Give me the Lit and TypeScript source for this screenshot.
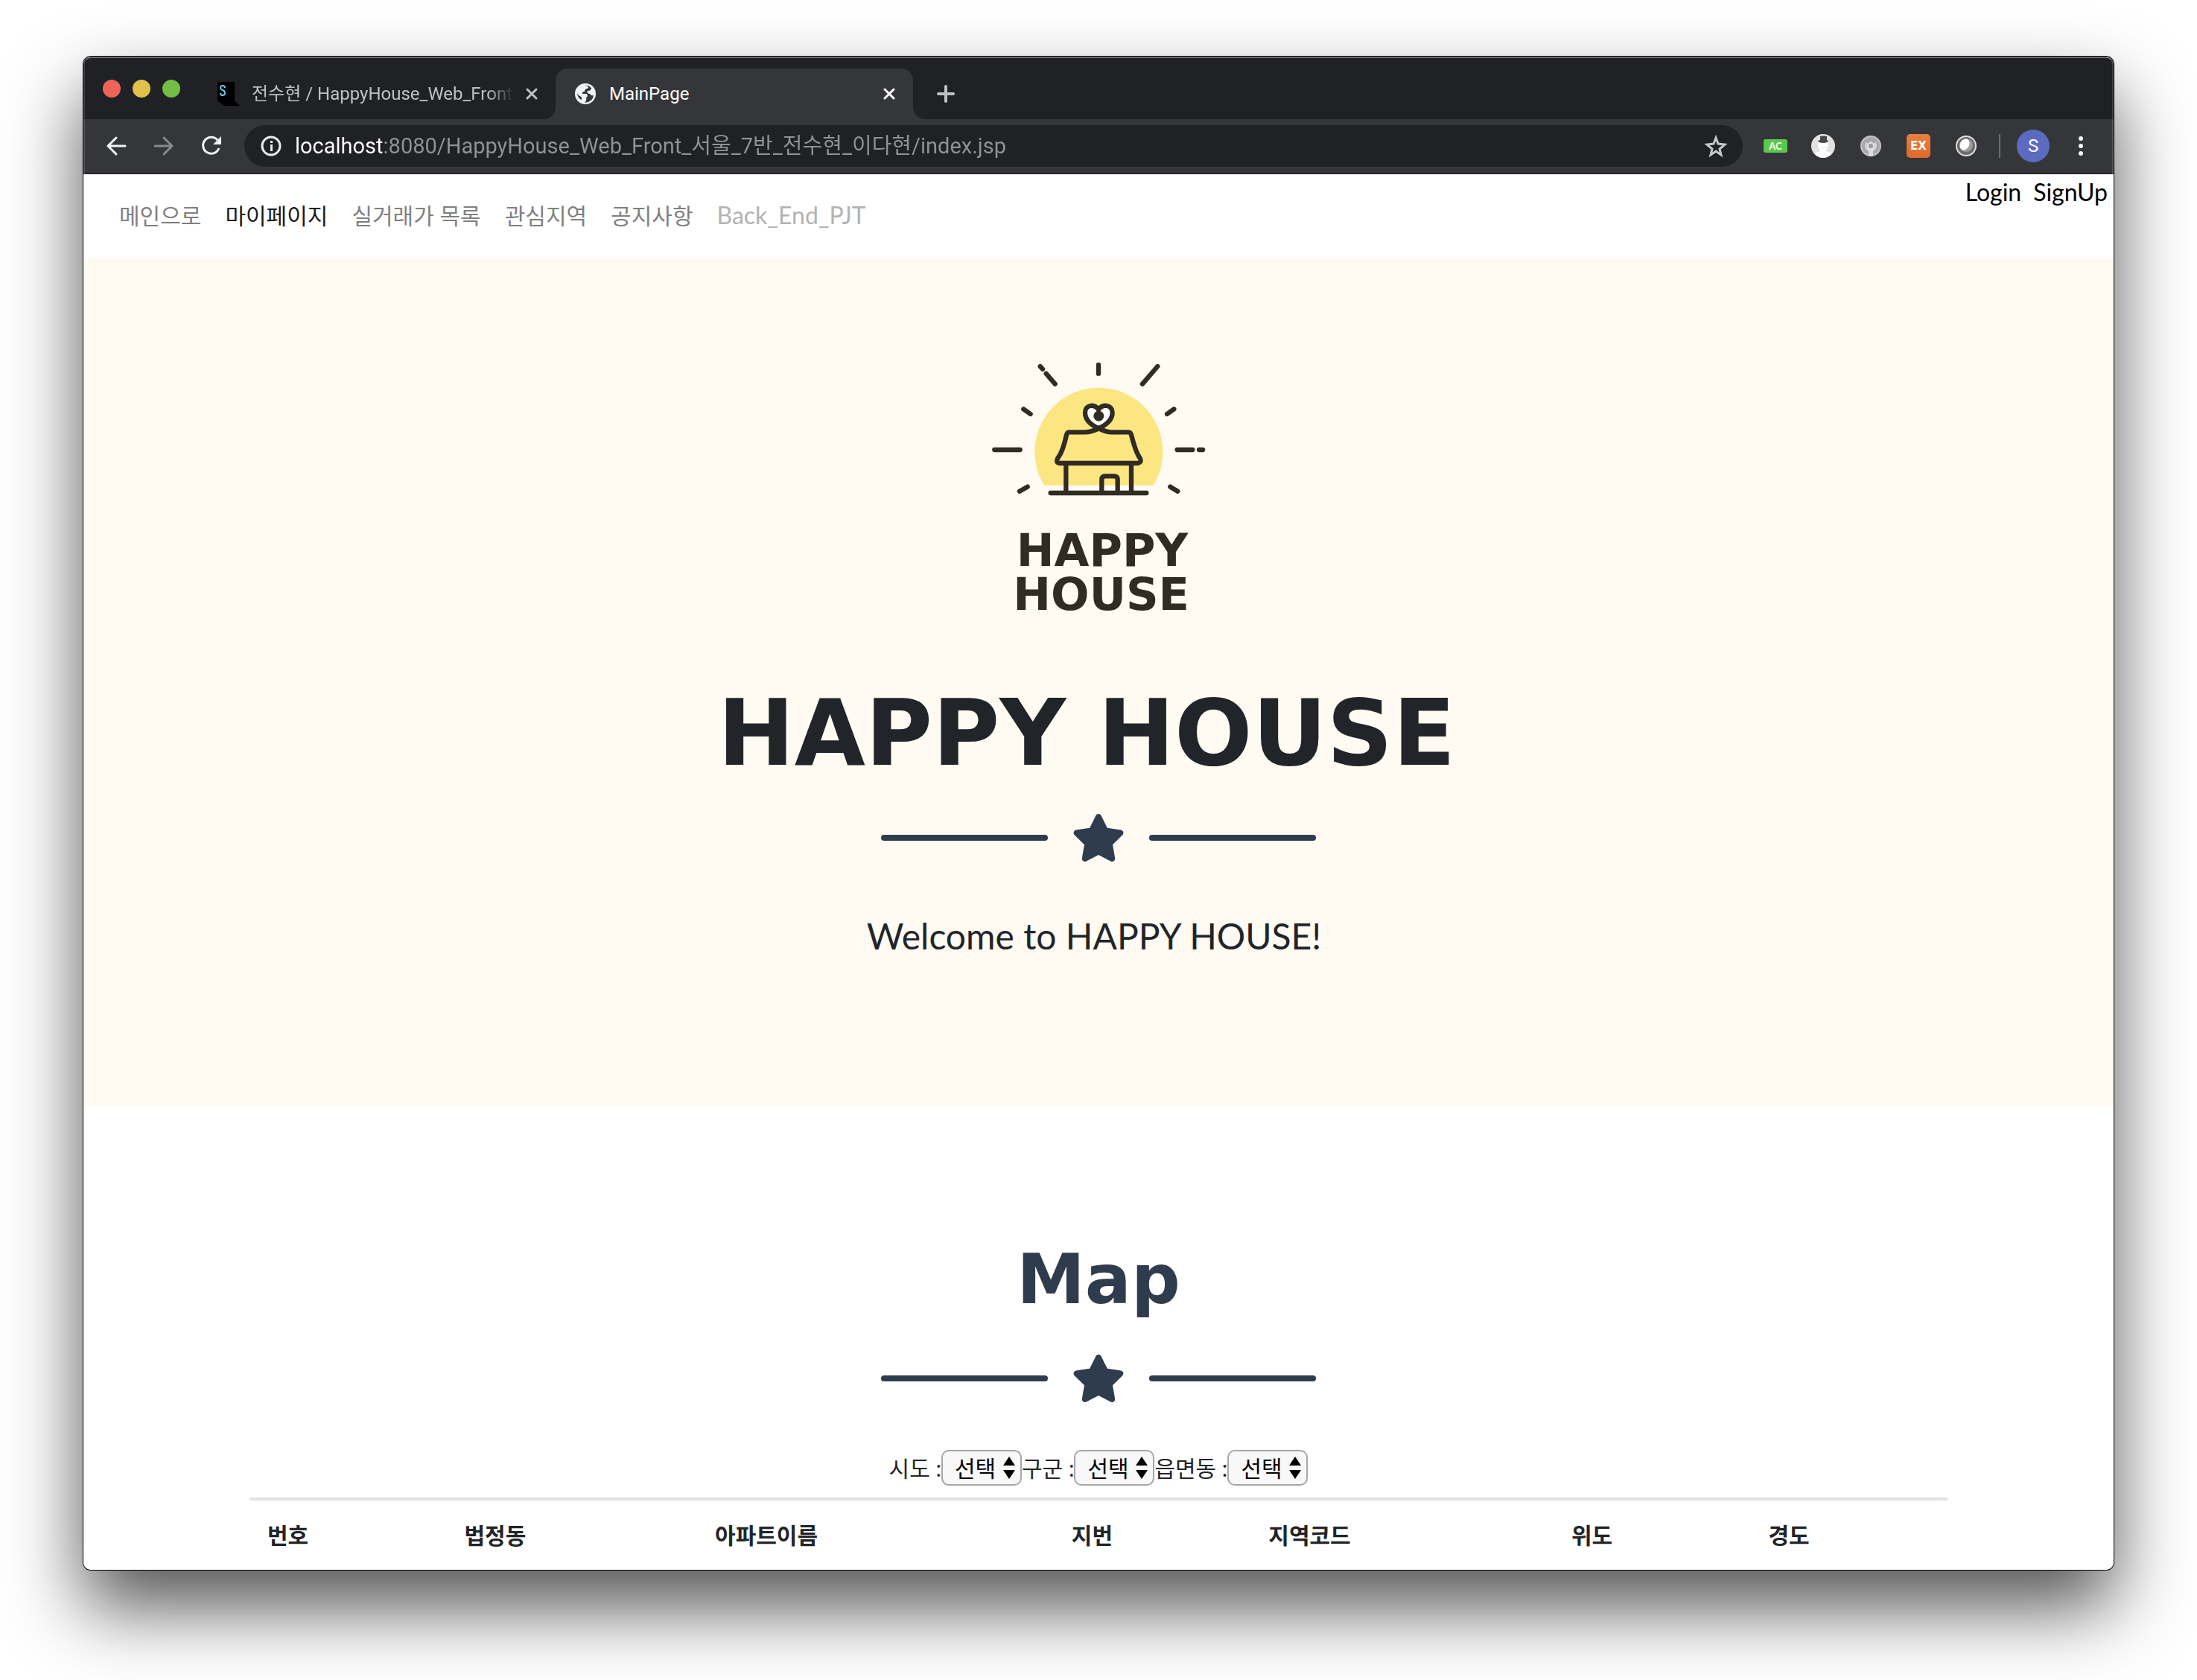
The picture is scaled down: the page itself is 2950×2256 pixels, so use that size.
import { LitElement, html, css, svg } from "lit";
import { customElement } from "lit/decorators.js";
import { classMap } from "lit/directives/class-map.js";

const NAV = [
  { text: "메인으로", kind: "muted" },
  { text: "마이페이지", kind: "current" },
  { text: "실거래가 목록", kind: "muted" },
  { text: "관심지역", kind: "muted" },
  { text: "공지사항", kind: "muted" },
  { text: "Back_End_PJT", kind: "disabled" },
];

const FILTERS = [
  { id: "sido", text: "시도 :" },
  { id: "gugun", text: "구군 :" },
  { id: "dong", text: "읍면동 :" },
];

const COLUMNS = [
  { name: "번호", cls: "w-s" },
  { name: "법정동", cls: "w-m" },
  { name: "아파트이름", cls: "w-xl" },
  { name: "지번", cls: "w-s" },
  { name: "지역코드", cls: "w-l" },
  { name: "위도", cls: "w-s" },
  { name: "경도", cls: "w-s" },
];

const closeIcon = html`<svg width="16" height="16" viewBox="0 0 16 16" fill="none" stroke="currentColor" stroke-width="3" stroke-linecap="round"><path d="M2 2l12 12M14 2L2 14" /></svg>`;

@customElement("browser-chrome")
export class BrowserChrome extends LitElement {
  static styles = css`
    :host {
      display: block;
      background: #202124;
      font-family: Roboto, "Noto Sans CJK KR", sans-serif;
      border-bottom: 2px solid #27262a;
    }
    button {
      display: flex;
      align-items: center;
      justify-content: center;
      padding: 0;
      border: 0;
      background: none;
      color: inherit;
      font: inherit;
    }
    svg { display: block; flex: none; }
    .strip {
      display: flex;
      height: 68px;
      padding-top: 16px;
    }
    .lights {
      display: flex;
      gap: 16px;
      width: 128px;
      padding: 15px 0 0 26px;
    }
    .light {
      width: 24px;
      height: 24px;
      border-radius: 50%;
    }
    .red { background: #ed6559; }
    .yellow { background: #e1c04c; }
    .green { background: #72be47; }
    .tab {
      position: relative;
      display: flex;
      align-items: center;
      box-sizing: border-box;
      width: 480px;
      padding: 0 24px;
      border-radius: 16px 16px 0 0;
      color: #bdc1c6;
      font-size: 24px;
      line-height: 32px;
    }
    .tab.active {
      background: #35363a;
      color: #fff;
    }
    .tab.active::before,
    .tab.active::after {
      content: "";
      position: absolute;
      bottom: 0;
      width: 16px;
      height: 16px;
    }
    .tab.active::before {
      right: 100%;
      background: radial-gradient(circle at 0 0, transparent 16px, #35363a 16px);
    }
    .tab.active::after {
      left: 100%;
      background: radial-gradient(circle at 100% 0, transparent 16px, #35363a 16px);
    }
    .title {
      flex: 1;
      min-width: 0;
      justify-content: flex-start;
      overflow: hidden;
      white-space: nowrap;
    }
    .title.faded {
      -webkit-mask-image: linear-gradient(90deg, #000 90%, transparent 100%);
      mask-image: linear-gradient(90deg, #000 90%, transparent 100%);
    }
    .title-row {
      display: flex;
      flex: 1;
      min-width: 0;
      gap: 16px;
      margin-right: 16px;
    }
    .new-tab {
      width: 64px;
      margin-left: 12px;
      color: #bdc1c6;
    }
    .toolbar {
      display: flex;
      align-items: center;
      height: 72px;
      padding: 0 12px;
      background: #35363a;
      color: #f1f3f4;
    }
    .tool {
      width: 64px;
      height: 56px;
      flex: none;
    }
    .dim { color: #87888b; }
    .omnibox {
      display: flex;
      align-items: center;
      flex: 1;
      min-width: 0;
      height: 56px;
      margin: 0 12px;
      border-radius: 28px;
      background: #202124;
    }
    .info { margin-left: 22px; }
    .url {
      flex: 1;
      min-width: 0;
      height: 52px;
      margin-left: 18px;
      padding: 0;
      border: 0;
      outline: 0;
      background: linear-gradient(90deg, #fff 120px, #919295 120px);
      -webkit-background-clip: text;
      background-clip: text;
      color: transparent;
      font: 29px/52px Roboto, "Noto Sans CJK KR", sans-serif;
    }
    .bookmark { width: 72px; height: 56px; color: #c6c7c9; }
    .rule {
      width: 2px;
      height: 32px;
      margin: 0 12px;
      background: #6c6d70;
    }
    .avatar {
      display: flex;
      align-items: center;
      justify-content: center;
      width: 44px;
      height: 44px;
      border-radius: 50%;
      background: #5c6bc0;
      color: #fff;
      font-size: 24px;
    }
    .chip {
      display: flex;
      align-items: center;
      justify-content: center;
      width: 32px;
      height: 18px;
      border-radius: 3px;
      background: #5bc94c;
      color: #fff;
      font: bold 13px Lato, sans-serif;
    }
    .chip.ex {
      height: 32px;
      border-radius: 5px;
      background: linear-gradient(#e5803e, #e0692f);
      font: bold 15px "DejaVu Sans", sans-serif;
    }
  `;

  render() {
    return html`
      <div class="strip">
        <div class="lights">
          <span class="light red"></span><span class="light yellow"></span><span class="light green"></span>
        </div>
        <div class="tab">
          <div class="title-row">
            <svg width="32" height="32" viewBox="0 0 32 32">
              <path d="M2 0H25V25L32 32H11L2 25z" fill="#000" />
              <path d="M12 8Q12 5 9 5Q6 5 6 8Q6 10 9 11Q12 12 12 15Q12 18 9 18Q6 18 6 15" fill="none" stroke="#6cc5ee" stroke-width="2" />
            </svg>
            <button class="title faded">전수현 / HappyHouse_Web_Front</button>
          </div>
          <button aria-label="Close tab">${closeIcon}</button>
        </div>
        <div class="tab active">
          <div class="title-row">
            <svg width="32" height="32" viewBox="0 0 32 32">
              <circle cx="16" cy="16" r="14" fill="#f1f3f4" />
              <path d="M16 5Q22 6 19 9Q15 9 15 13Q11 13 12 16H18Q20 20 17 21Q18 25 15 28Q26 27 27 18Q23 19 22 16Q17 15 19 12Q24 12 24 8Q20 4 16 5zM5 15Q5 20 10 24Q13 22 9 19Q6 18 5 15z" fill="#35363a" />
            </svg>
            <button class="title">MainPage</button>
          </div>
          <button aria-label="Close tab">${closeIcon}</button>
        </div>
        <button class="new-tab" aria-label="New tab">
          <svg width="24" height="24" viewBox="0 0 24 24" stroke="currentColor" stroke-width="4" stroke-linecap="round"><path d="M12 2v20M2 12h20" /></svg>
        </button>
      </div>
      <div class="toolbar">
        <button class="tool" aria-label="Back">
          <svg width="32" height="32" viewBox="0 0 32 32" fill="none" stroke="currentColor" stroke-width="3" stroke-linecap="round"><path d="M28 16H5M16 5L5 16l11 11" /></svg>
        </button>
        <button class="tool dim" aria-label="Forward">
          <svg width="32" height="32" viewBox="0 0 32 32" fill="none" stroke="currentColor" stroke-width="3" stroke-linecap="round"><path d="M4 16H27M16 5l11 11L16 27" /></svg>
        </button>
        <button class="tool" aria-label="Reload">
          <svg width="32" height="32" viewBox="0 0 32 32"><path d="M26 19A11 11 0 1 1 24 8" fill="none" stroke="currentColor" stroke-width="3" /><path d="M29 3V14H18z" fill="currentColor" /></svg>
        </button>
        <div class="omnibox">
          <svg class="info" width="28" height="28" viewBox="0 0 28 28"><circle cx="14" cy="14" r="12" fill="none" stroke="#e8eaed" stroke-width="3" /><path d="M13 12h3v9h-3zM13 7h3v3h-3z" fill="#e8eaed" /></svg>
          <input class="url" aria-label="Address" value="localhost:8080/HappyHouse_Web_Front_서울_7반_전수현_이다현/index.jsp" />
          <button class="bookmark" aria-label="Bookmark">
            <svg width="32" height="32" viewBox="0 0 32 32" fill="none" stroke="currentColor" stroke-width="3"><path d="M16 5l3 8 9 1-7 6 2 8-7-5-7 5 2-8-7-6 9-1z" /></svg>
          </button>
        </div>
        <button class="tool"><span class="chip">AC</span></button>
        <button class="tool" aria-label="Snowman">
          <svg width="32" height="32" viewBox="0 0 32 32"><circle cx="16" cy="16" r="16" fill="#e2e2e2" /><path d="M9 14Q9 9 16 9T23 14Q23 19 20 21V23Q26 24 27 27Q22 32 16 32Q9 32 5 27Q6 24 12 23V21Q9 19 9 14z" fill="#fff" /><path d="M12 3Q16 2 21 3V8L23 9Q22 12 16 12Q10 12 9 9L12 8z" fill="#484848" /><path d="M13 17Q16 21 20 17" fill="none" stroke="#ddd" /></svg>
        </button>
        <button class="tool" aria-label="Badge">
          <svg width="28" height="28" viewBox="0 0 28 28"><circle cx="14" cy="14" r="13" fill="#a9a9a9" stroke="#c4c4c4" stroke-width="2" /><path d="M7 9Q4 17 11 21V28h6V21Q24 17 21 9L19 10Q21 15 17 18H11Q7 15 9 10z" fill="#dcdcdc" /><path d="M14 8l5 3v6l-5 3-5-3v-6z" fill="#dedede" /><circle cx="14" cy="14" r="3" fill="#9b9b9b" /></svg>
        </button>
        <button class="tool"><span class="chip ex">EX</span></button>
        <button class="tool" aria-label="Lens">
          <svg width="28" height="28" viewBox="0 0 28 28"><circle cx="14" cy="14" r="13" fill="#6b6b6b" stroke="#ddd" stroke-width="2" /><circle cx="14" cy="13" r="9" fill="#9c9c9c" /><ellipse cx="12" cy="12" rx="6" ry="8" fill="#fff" transform="rotate(30 12 12)" /></svg>
        </button>
        <span class="rule"></span>
        <button class="tool" aria-label="Profile"><span class="avatar">S</span></button>
        <button class="tool" aria-label="Menu">
          <svg width="8" height="28" viewBox="0 0 8 28" fill="currentColor"><circle cx="4" cy="4" r="3" /><circle cx="4" cy="14" r="3" /><circle cx="4" cy="24" r="3" /></svg>
        </button>
      </div>
    `;
  }
}

@customElement("star-divider")
export class StarDivider extends LitElement {
  static styles = css`
    :host {
      display: flex;
      align-items: center;
      justify-content: center;
      gap: 32px;
      color: #2f3c4e;
    }
    .line {
      width: 224px;
      height: 8px;
      border-radius: 4px;
      background: currentColor;
    }
    svg { display: block; }
  `;

  render() {
    return html`
      <span class="line"></span>
      <svg width="72" height="64" viewBox="0 0 576 512" fill="currentColor">
        <path d="M259.3 17.8L194 150.2 47.9 171.5c-26.2 3.8-36.7 36.1-17.7 54.6l105.7 103-25 145.5c-4.5 26.3 23.2 46 46.4 33.7L288 439.6l130.7 68.7c23.2 12.2 50.9-7.4 46.4-33.7l-25-145.5 105.7-103c19-18.5 8.5-50.8-17.7-54.6L382 150.2 316.7 17.8c-11.7-23.6-45.6-23.9-57.4 0z" />
      </svg>
      <span class="line"></span>
    `;
  }
}

@customElement("house-logo")
export class HouseLogo extends LitElement {
  static styles = css`
    :host { display: block; }
    svg { display: block; }
    .word {
      fill: #312b24;
      font: bold 182px "DejaVu Sans", sans-serif;
      text-anchor: middle;
    }
  `;

  render() {
    const rays = svg`<path d="M260 66l10 11M284 95l36 42M495 60V95M733 66L672 137M193 238l28 20M799 238l-28 20M76 402H179M812 402H874M900 402H915M177 569l32-18M784 551l30 18" />`;
    return html`
      <svg width="330" height="370" viewBox="0 0 990 1110">
        <path d="M276 545A258 258 0 1 1 716 545z" fill="#fbe681" />
        <g fill="none" stroke="#312b24" stroke-width="19" stroke-linecap="round" stroke-linejoin="round">
          ${rays}
          <path d="M496 316C460 300 441 278 441 252C441 221 478 215 495 240C512 215 551 221 551 252C551 278 530 300 496 316z" fill="#fff" />
          <path d="M302 576H688M364 458V576M627 458V576M508 574V522Q508 508 522 508H558Q572 508 572 522V574" />
          <path d="M500 314C470 330 455 331 440 331H376Q369 331 366 342Q352 408 332 434Q320 455 340 456H652Q672 453 661 434Q645 412 628 345Q625 331 616 331H545C525 330 515 325 492 314" />
        </g>
        <circle cx="496" cy="266" r="21" fill="#312b24" />
        <path d="M495 240v26" stroke="#312b24" stroke-width="14" />
        <text class="word" x="510" y="870">HAPPY</text>
        <text class="word" x="506" y="1046">HOUSE</text>
      </svg>
    `;
  }
}

@customElement("app-root")
export class AppRoot extends LitElement {
  static styles = css`
    :host {
      display: flex;
      box-sizing: border-box;
      min-height: 100vh;
      padding: 76px 112px 148px;
      background: #fff;
      color: #212529;
      font-family: Lato, "Noto Sans CJK KR", sans-serif;
      font-size: 32px;
    }
    .window {
      position: relative;
      flex: 1;
      min-width: 0;
      overflow: hidden;
      border-radius: 10px;
      background: #fff;
    }
    .frame {
      display: flex;
      flex: 1;
      min-width: 0;
      border-radius: 10px;
      box-shadow: 0 0 0 1px #000, 0 50px 100px rgba(0, 0, 0, 0.68);
    }
    .edge {
      position: absolute;
      inset: 0 0 auto;
      height: 158px;
      border: 2px solid rgba(255, 255, 255, 0.16);
      border-top-color: rgba(255, 255, 255, 0.34);
      border-bottom: 0;
      border-radius: 10px 10px 0 0;
      box-sizing: border-box;
      pointer-events: none;
    }
    a { color: inherit; text-decoration: none; }
    .top {
      display: flex;
      justify-content: space-between;
      height: 112px;
      padding: 0 8px 0 48px;
    }
    .links {
      display: flex;
      align-items: center;
      gap: 32px;
      padding-bottom: 2px;
      font-size: 30px;
      line-height: 48px;
    }
    .links .muted { color: #808080; }
    .links .current { color: #1a1a1a; }
    .links .disabled { color: #b3b3b3; font-size: 32px; }
    .auth {
      display: flex;
      gap: 16px;
      color: #000;
      line-height: 48px;
    }
    .hero {
      display: flex;
      flex-direction: column;
      align-items: center;
      padding: 124px 0 192px;
      background: #fffaf2;
    }
    h1, h2, p { margin: 0; }
    h1 {
      margin: 73px 0 36px;
      padding-right: 32px;
      font: bold 123px/144px "DejaVu Sans", sans-serif;
    }
    .welcome {
      margin-top: 64px;
      padding-right: 12px;
      font-size: 48px;
      line-height: 72px;
    }
    .map {
      max-width: 2280px;
      margin: 0 auto;
      padding-top: 178px;
    }
    h2 {
      margin-bottom: 44px;
      color: #2f3c4e;
      text-align: center;
      font: bold 92px/112px "DejaVu Sans", sans-serif;
    }
    .filters {
      display: flex;
      align-items: center;
      justify-content: center;
      margin: 64px 0 16px;
      font-size: 30px;
      line-height: 48px;
    }
    .picker { display: grid; }
    .picker > * { grid-area: 1 / 1; }
    .picker svg {
      align-self: center;
      justify-self: end;
      margin-right: 9px;
      pointer-events: none;
    }
    select {
      appearance: none;
      box-sizing: border-box;
      width: 108px;
      height: 48px;
      margin: 0;
      padding: 0 0 0 16px;
      border: 2px solid #a6a6a6;
      border-radius: 10px;
      background: #f8f8f8;
      color: #000;
      font: inherit;
      line-height: 40px;
    }
    table {
      width: 100%;
      border-collapse: separate;
      border-spacing: 0;
      border-top: 4px solid #dee2e6;
      table-layout: fixed;
    }
    th {
      box-sizing: border-box;
      padding: 22px 24px 16px;
      text-align: left;
      font-size: 30px;
      line-height: 48px;
    }
    .w-s { width: 264px; }
    .w-m { width: 336px; }
    .w-l { width: 406px; }
    .w-xl { width: 478px; }
  `;

  render() {
    return html`
      <div class="frame">
        <div class="window">
          <browser-chrome></browser-chrome>
          <div class="edge"></div>
          <header class="top">
            <nav class="links">
              ${NAV.map((n) => html`<a href="#" class=${classMap({ [n.kind]: true })}>${n.text}</a>`)}
            </nav>
            <div class="auth"><a href="#">Login</a><a href="#">SignUp</a></div>
          </header>
          <section class="hero">
            <house-logo></house-logo>
            <h1>HAPPY HOUSE</h1>
            <star-divider></star-divider>
            <p class="welcome">Welcome to HAPPY HOUSE!</p>
          </section>
          <section class="map">
            <h2>Map</h2>
            <star-divider></star-divider>
            <form class="filters">
              ${FILTERS.map(
                (f) => html`
                  <label for=${f.id}>${f.text}</label>
                  <span class="picker">
                    <select id=${f.id}><option>선택</option></select>
                    <svg width="16" height="30" viewBox="0 0 16 30"><path d="M0 12L8 0L16 12zM0 18H16L8 30z" /></svg>
                  </span>
                `,
              )}
            </form>
            <table>
              <thead>
                <tr>${COLUMNS.map((c) => html`<th scope="col" class=${c.cls}>${c.name}</th>`)}</tr>
              </thead>
            </table>
          </section>
        </div>
      </div>
    `;
  }
}
